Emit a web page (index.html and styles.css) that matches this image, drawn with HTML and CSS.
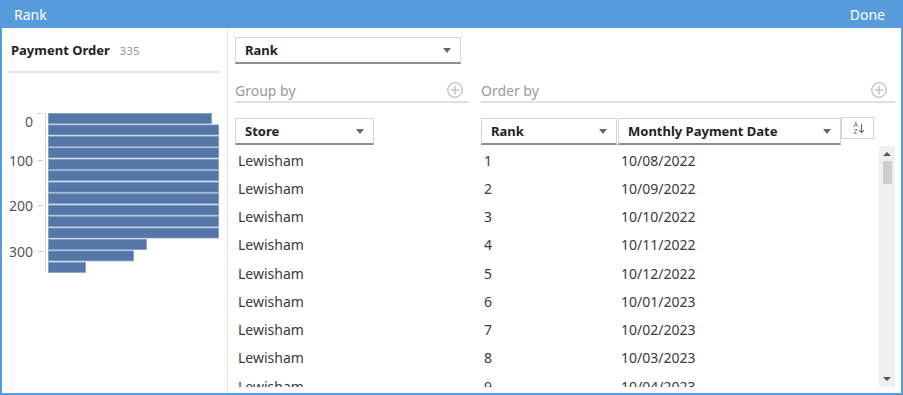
FILE: index.html
```html
<!DOCTYPE html>
<html lang="en">

<head>
    <meta charset="UTF-8">
    <title>Rank</title>
    <link rel="stylesheet" href="styles.css">
</head>

<body>
    <div class="window">
        <header class="titlebar">
            <span>Rank</span>
            <span>Done</span>
        </header>

        <div class="content">
            <!-- Profil du champ -->
            <aside class="profile">
                <div class="profile-head">
                    <b>Payment Order</b><span class="count">335</span>
                </div>
                <svg class="histogram" width="212" height="172" viewBox="0 0 212 172">
                    <line x1="37.5" y1="8" x2="37.5" y2="167" stroke="#d4d4d4" />
                    <line x1="29" y1="8.5" x2="35" y2="8.5" stroke="#d4d4d4" />
                    <line x1="30" y1="55.5" x2="35" y2="55.5" stroke="#c8c8c8" />
                    <line x1="30" y1="100.5" x2="35" y2="100.5" stroke="#c8c8c8" />
                    <line x1="30" y1="146.5" x2="35" y2="146.5" stroke="#c8c8c8" />
                    <g class="axis-labels" text-anchor="end" dominant-baseline="central">
                        <text x="25" y="16">0</text>
                        <text x="25" y="55">100</text>
                        <text x="25" y="100">200</text>
                        <text x="25" y="146">300</text>
                    </g>
                    <g class="bars">
                        <rect x="40.5" y="8.5" width="163" height="10" />
                        <rect x="40.5" y="19.95" width="170" height="10" />
                        <rect x="40.5" y="31.4" width="170" height="10" />
                        <rect x="40.5" y="42.85" width="170" height="10" />
                        <rect x="40.5" y="54.3" width="170" height="10" />
                        <rect x="40.5" y="65.75" width="170" height="10" />
                        <rect x="40.5" y="77.2" width="170" height="10" />
                        <rect x="40.5" y="88.65" width="170" height="10" />
                        <rect x="40.5" y="100.1" width="170" height="10" />
                        <rect x="40.5" y="111.55" width="170" height="10" />
                        <rect x="40.5" y="123" width="170" height="10" />
                        <rect x="40.5" y="134.45" width="98" height="10" />
                        <rect x="40.5" y="145.9" width="85" height="10" />
                        <rect x="40.5" y="157.35" width="37" height="10" />
                    </g>
                </svg>
            </aside>

            <!-- Paramètres du rang -->
            <main class="settings">
                <div class="select select-main">
                    <span>Rank</span><i class="caret"></i>
                </div>

                <div class="fields">
                    <div class="field field-group">
                        <div class="field-label">
                            <span>Group by</span>
                            <svg class="plus" width="16" height="16" viewBox="0 0 16 16">
                                <circle cx="8" cy="8" r="7.3" />
                                <path d="M8 3.5v9M3.5 8h9" />
                            </svg>
                        </div>
                        <div class="select select-store">
                            <span>Store</span><i class="caret"></i>
                        </div>
                    </div>

                    <div class="field field-order">
                        <div class="field-label">
                            <span>Order by</span>
                            <svg class="plus" width="16" height="16" viewBox="0 0 16 16">
                                <circle cx="8" cy="8" r="7.3" />
                                <path d="M8 3.5v9M3.5 8h9" />
                            </svg>
                        </div>
                        <div class="order-row">
                            <div class="select select-rank">
                                <span>Rank</span><i class="caret"></i>
                            </div>
                            <div class="select select-date">
                                <span>Monthly Payment Date</span><i class="caret"></i>
                            </div>
                            <div class="sort-btn">
                                <svg width="16" height="14" viewBox="0 0 16 14">
                                    <text class="sort-letter"><tspan x="3.5" y="6">A</tspan><tspan x="3.5" y="13">Z</tspan></text>
                                    <path d="M11.5 3v8.5M9.3 9.3l2.2 2.4 2.2-2.4" />
                                </svg>
                            </div>
                        </div>
                    </div>
                </div>

                <div class="rows">
                    <div class="rows-list">
                        <div class="row"><span>Lewisham</span><span>1</span><span>10/08/2022</span></div>
                        <div class="row"><span>Lewisham</span><span>2</span><span>10/09/2022</span></div>
                        <div class="row"><span>Lewisham</span><span>3</span><span>10/10/2022</span></div>
                        <div class="row"><span>Lewisham</span><span>4</span><span>10/11/2022</span></div>
                        <div class="row"><span>Lewisham</span><span>5</span><span>10/12/2022</span></div>
                        <div class="row"><span>Lewisham</span><span>6</span><span>10/01/2023</span></div>
                        <div class="row"><span>Lewisham</span><span>7</span><span>10/02/2023</span></div>
                        <div class="row"><span>Lewisham</span><span>8</span><span>10/03/2023</span></div>
                        <div class="row"><span>Lewisham</span><span>9</span><span>10/04/2023</span></div>
                        <div class="row"><span>Lewisham</span><span>10</span><span>10/05/2023</span></div>
                    </div>
                    <div class="scrollbar">
                        <i class="arrow arrow-up"></i>
                        <div class="thumb"></div>
                        <i class="arrow arrow-down"></i>
                    </div>
                </div>
            </main>
        </div>
    </div>
</body>

</html>
```

FILE: styles.css
```css
/* Reset */

* {
    padding: 0;
    margin: 0;
    box-sizing: border-box;
}

body {
    width: 903px;
    height: 395px;
    overflow: hidden;
    font-family: "Noto Sans", "Open Sans", sans-serif;
    font-size: 14px;
    color: #333;
    background: #fff;
}

/* Fenêtre */

.window {
    width: 903px;
    height: 395px;
    display: flex;
    flex-direction: column;
}

.titlebar {
    flex: 0 0 28px;
    display: flex;
    justify-content: space-between;
    align-items: center;
    padding: 0 18px 0 14px;
    background-color: #579bdb;
    color: #fff;
    font-size: 14px;
}

.content {
    flex: 1 1 0;
    display: flex;
    border: 2px solid #579bdb;
    border-top: 0;
    min-height: 0;
}

/* Profil à gauche */

.profile {
    flex: 0 0 225px;
    border-right: 1px solid #e6e6e6;
    padding: 0 7px 0 6px;
}

.profile-head {
    display: flex;
    align-items: baseline;
    padding: 13px 0 11px 3px;
    line-height: 18px;
    border-bottom: 2px solid #e4e4e4;
}

.profile-head b {
    font-size: 13px;
    color: #222;
}

.count {
    margin-left: 10px;
    font-size: 11.5px;
    color: #999;
}

.histogram {
    display: block;
    margin-top: 32px;
}

.axis-labels {
    font-family: "Noto Sans", sans-serif;
    font-size: 14px;
    fill: #555;
}

.bars rect {
    fill: #5577a8;
    stroke: #7f9bc3;
    stroke-width: 0.8;
}

/* Paramètres à droite */

.settings {
    flex: 1 1 auto;
    display: flex;
    flex-direction: column;
    padding: 9px 6px 6px 7px;
    min-width: 0;
}

.settings > * {
    flex-shrink: 0;
}

.select {
    height: 27px;
    flex-shrink: 0;
    display: flex;
    align-items: center;
    justify-content: space-between;
    padding: 0 9px 0 9px;
    border: 1px solid #d6d6d6;
    border-bottom: 2px solid #8f8f8f;
    font-size: 13px;
    font-weight: bold;
    color: #222;
    background: #fff;
}

.caret {
    width: 0;
    height: 0;
    border-left: 4.5px solid transparent;
    border-right: 4.5px solid transparent;
    border-top: 5px solid #666;
}

.select-main {
    width: 226px;
}

.fields {
    display: flex;
    gap: 13px;
    margin-top: 15px;
}

.field-group {
    flex: 0 0 233px;
}

.field-order {
    flex: 1 1 auto;
}

.field-label {
    display: flex;
    justify-content: space-between;
    align-items: center;
    height: 24px;
    padding-right: 5px;
    border-bottom: 2px solid #e0e0e0;
    color: #9a9a9a;
    font-size: 14px;
}

.field-order .field-label {
    padding-right: 8px;
}

.plus {
    fill: none;
    stroke: #aaa;
    stroke-width: 1;
}

.select-store {
    width: 139px;
    margin-top: 15px;
}

.order-row {
    display: flex;
    align-items: flex-start;
    margin-top: 14px;
}

.select-rank {
    width: 136px;
    margin-top: 1px;
}

.select-date {
    width: 223px;
    margin-left: 1px;
    margin-top: 1px;
}

.sort-btn {
    width: 33px;
    height: 22px;
    display: flex;
    align-items: center;
    justify-content: center;
    border: 1px solid #d6d6d6;
}

.sort-btn path {
    fill: none;
    stroke: #666;
    stroke-width: 1.1;
}

.sort-letter {
    font-family: "Noto Sans", sans-serif;
    font-size: 7px;
    fill: #666;
}

/* Lignes de données */

.rows {
    flex: 1 1 0;
    display: flex;
    min-height: 0;
    margin-top: 1px;
}

.rows-list {
    flex: 1 1 auto;
    overflow: hidden;
}

.row {
    display: grid;
    grid-template-columns: 246px 137px 1fr;
    height: 28.25px;
    align-items: center;
    color: #3a3a3a;
}

.row span {
    padding-left: 3px;
}

.scrollbar {
    flex: 0 0 16px;
    display: flex;
    flex-direction: column;
    align-items: center;
    background: #f0f0f0;
    padding: 6px 0 6px 0;
}

.arrow {
    width: 0;
    height: 0;
    border-left: 4px solid transparent;
    border-right: 4px solid transparent;
}

.arrow-up {
    border-bottom: 4px solid #555;
}

.arrow-down {
    border-top: 4px solid #555;
    margin-top: auto;
}

.thumb {
    width: 9px;
    height: 23px;
    margin-top: 5px;
    background: #cdcdcd;
}
```
